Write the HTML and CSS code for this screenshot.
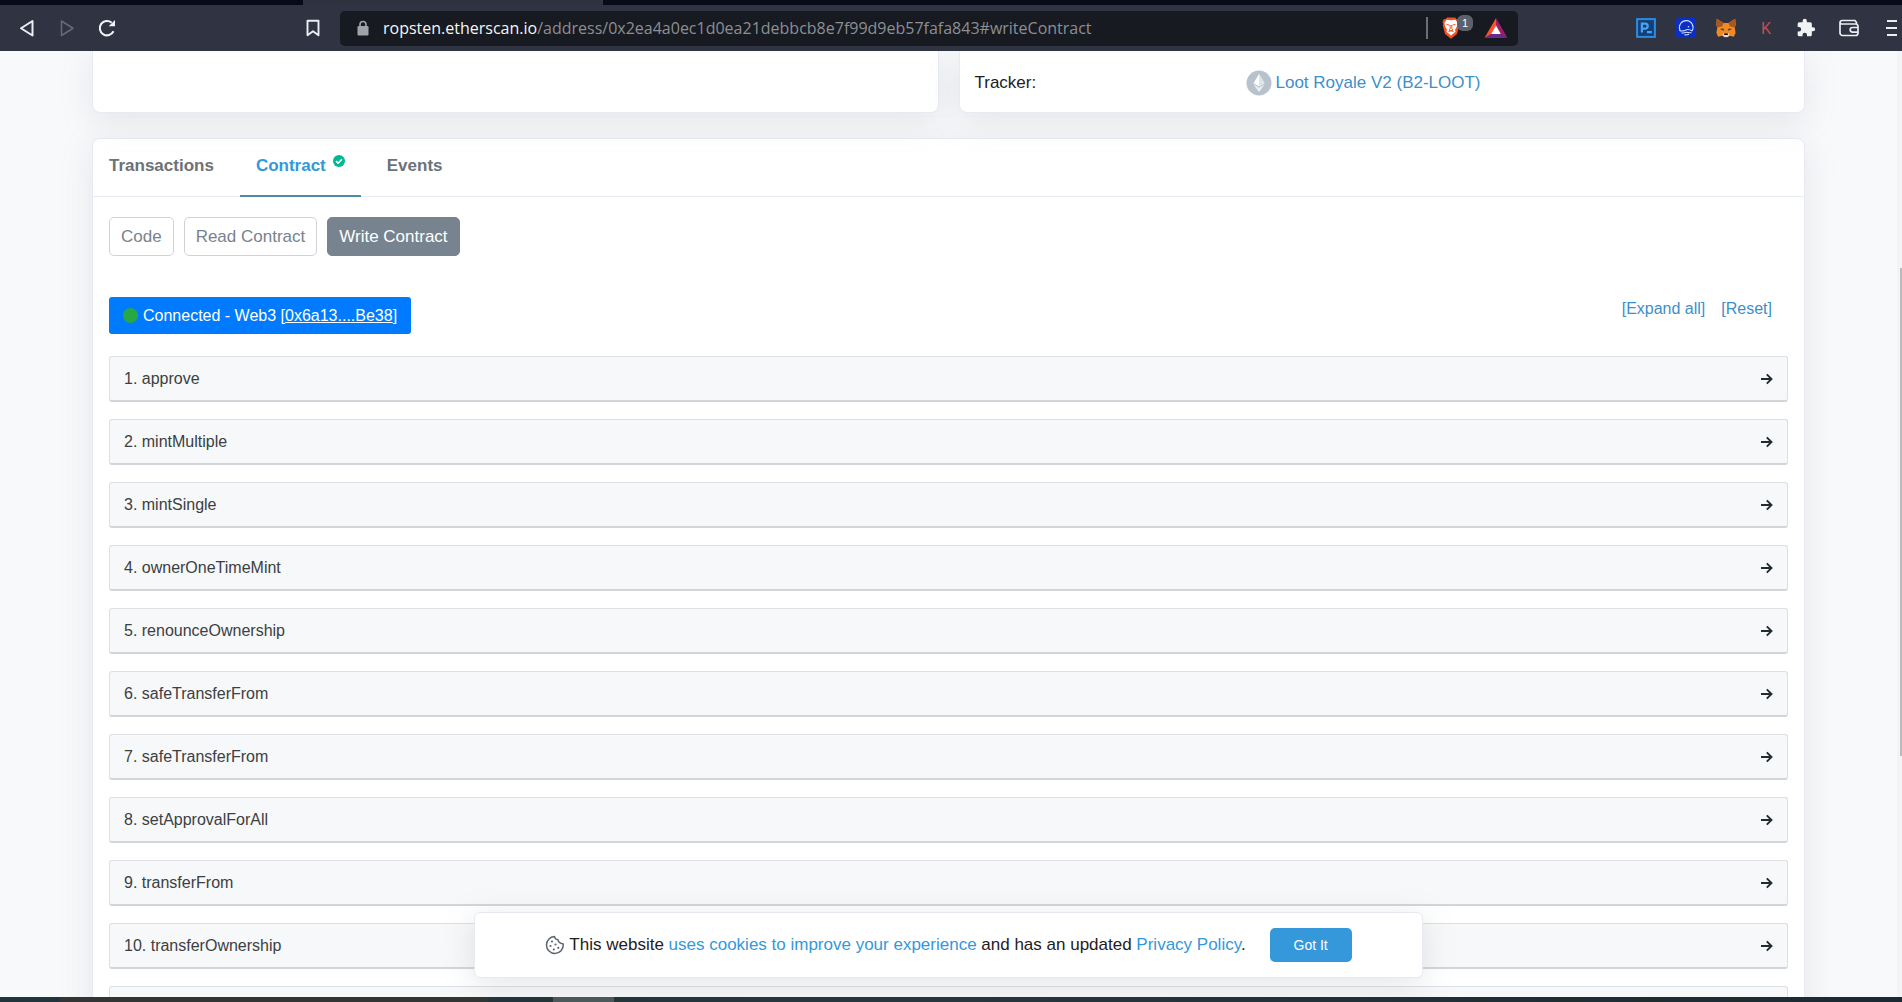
FILE: index.html
```html
<!DOCTYPE html>
<html lang="en">
<head>
<meta charset="utf-8">
<title>Contract | Etherscan</title>
<link rel="stylesheet" href="styles.css">
</head>
<body>
<div class="tabstrip"><div class="tabstrip-active"></div></div>
<header class="toolbar">
  <div class="nav-group">
    <button class="tool" aria-label="Back"><svg width="20" height="20" viewBox="0 0 20 20"><path d="M15.500 3v14.500L4 10.250z" fill="none" stroke="#eceef5" stroke-width="2" stroke-linejoin="round"/></svg></button>
    <button class="tool" aria-label="Forward"><svg width="20" height="20" viewBox="0 0 20 20"><path d="M4.500 3v14.500L16 10.250z" fill="none" stroke="#666a78" stroke-width="1.500" stroke-linejoin="round"/></svg></button>
    <button class="tool" aria-label="Reload"><svg width="20" height="20" viewBox="0 0 20 20"><path d="M16.500 13.300A7.200 7.200 0 1 1 14.700 4.700" fill="none" stroke="#f2f3f8" stroke-width="2.100"/><path d="M18 2v6.300h-6.300z" fill="#f2f3f8"/></svg></button>
  </div>
  <button class="tool bookmark" aria-label="Bookmark"><svg width="20" height="20" viewBox="0 0 20 20"><path d="M4.500 2.800h11v14.400L10 13.200l-5.500 4z" fill="none" stroke="#eceef5" stroke-width="1.900" stroke-linejoin="round"/></svg></button>
  <div class="address">
    <svg width="12" height="16" viewBox="0 0 12 16"><path d="M3 7V4.500a3 3 0 0 1 6 0V7" fill="none" stroke="#a0a3a8" stroke-width="1.600"/><rect x="0.500" y="6" width="11" height="9.500" rx="1.300" fill="#a0a3a8"/></svg>
    <div class="url"><span class="host">ropsten.etherscan.io</span>/address/0x2ea4a0ec1d0ea21debbcb8e7f99d9eb57fafa843#writeContract</div>
    <button class="tool shield" aria-label="Shields">
      <svg width="18" height="22" viewBox="0 0 18 22"><path d="M5 0.500h8l1.500 1.800 1.700-.3 1.300 3-.7 2 .4 1.500-2.200 8.500L9 21.700 3 17 .8 8.500 1.200 7 .5 5l1.300-3 1.700.3z" fill="#f4511e"/><path d="M9 3.300l4.500-.5 2 3-.5 3.500-2 3.500.5 2L9 18.500 4.500 14.800l.5-2L3 9.300 2.500 5.800l2-3z" fill="#fff"/><path d="M4.500 7.300l3 .9M13.500 7.300l-3 .9M8.200 8v3.500L7 13l2 1 2-1-1.200-1.500V8M6.300 14.800L9 13.600l2.700 1.200" fill="none" stroke="#f4511e" stroke-width="1"/></svg>
      <span class="badge">1</span>
    </button>
    <button class="tool" aria-label="Rewards"><svg width="24" height="22" viewBox="0 0 24 22"><path d="M12 1L.5 21 7.500 17 12 8.500z" fill="#ff5026"/><path d="M12 1l11.500 20-7-4L12 8.500z" fill="#9e1f63"/><path d="M.5 21h23l-7-4h-9z" fill="#662d91"/><path d="M12 8.500L16.800 17H7.200z" fill="#fff"/></svg></button>
  </div>
  <div class="extensions">
    <button class="tool" aria-label="P extension"><svg width="20" height="20" viewBox="0 0 22 22"><rect x="1.200" y="1.200" width="19.600" height="19.600" fill="#123f78" stroke="#2f8be0" stroke-width="2.200"/><path d="M6.500 16V6.300h3.600a2.700 2.700 0 0 1 0 5.500H6.500M12 15.500h5.500" fill="none" stroke="#4aa3f2" stroke-width="2.500"/></svg></button>
    <button class="tool" aria-label="Blue extension"><svg width="20" height="20" viewBox="0 0 20 20"><rect width="20" height="20" rx="2" fill="#0b2fc4"/><path d="M4 12.200A6.800 6.800 0 1 1 16 13M3.300 12.200c2 1.400 4.300.8 6 0 2.300-1.200 4.500-.8 6.700.8M5.500 14.800c2 .6 3-.5 5-.5s3 1 5 .3M8.500 16.800c1.500.4 3-.4 4.500-.2" fill="none" stroke="#cfdcff" stroke-width="1.100"/><circle cx="12.500" cy="8.800" r=".8" fill="#cfdcff"/></svg></button>
    <button class="tool" aria-label="Fox wallet"><svg width="20" height="20" viewBox="0 0 20 20"><path d="M.8.8L7.500 5h5L19.200.8l.5 6-1 3 .9 5-1.700 4-4.200-1-2 1.400H8.300l-2-1.400-4.200 1-1.700-4 .9-5-1-3z" fill="#f08a24"/><path d="M.8.8L7.500 5 6 8.500l-4.700 1L.3 6.800zM19.200.8L12.500 5 14 8.500l4.700 1 1-2.700z" fill="#a9571d"/><path d="M3.800 11l3.500-.6.8 2.400zM16.200 11l-3.500-.6-.8 2.400z" fill="#33363d"/><path d="M7 15.500l1.200-.5h3.600l1.200.5.3 2-2 1.500H8.700l-2-1.500z" fill="#e8ddd2"/><path d="M8.300 15.300h3.400l.3 1.700H8z" fill="#17191d"/></svg></button>
    <button class="tool k-ext" aria-label="K extension">K</button>
    <button class="tool" aria-label="Extensions"><svg width="20" height="20" viewBox="0 0 24 24"><path d="M20.500 11H19V7a2 2 0 0 0-2-2h-4V3.500a2.500 2.500 0 0 0-5 0V5H4a2 2 0 0 0-2 2v3.800h1.500a2.700 2.700 0 0 1 0 5.400H2V20a2 2 0 0 0 2 2h3.800v-1.500a2.700 2.700 0 0 1 5.400 0V22H17a2 2 0 0 0 2-2v-4h1.500a2.500 2.500 0 0 0 0-5z" fill="#f1f2f4"/></svg></button>
    <button class="tool" aria-label="Wallet"><svg width="26" height="20" viewBox="-3 0 26 20"><path d="M17.500 6V4.500l-1.500-2H3a2 2 0 0 0-2 2V15a2.500 2.500 0 0 0 2.500 2.500h13A2.500 2.500 0 0 0 19 15V8.500A2.300 2.300 0 0 0 16.700 6H3a2 2 0 0 1-2-1.700M19 9.500h-5.500a2.300 2.300 0 0 0 0 4.600H19" fill="none" stroke="#eceef2" stroke-width="1.700"/></svg></button>
    <button class="tool" aria-label="Menu"><svg width="20" height="20" viewBox="0 0 20 20"><path d="M5 3h10M4 10h11M5 17h10" stroke="#eceef2" stroke-width="1.900"/></svg></button>
  </div>
</header>

<div class="viewport">
  <main class="page">
    <section class="overview">
      <div class="card"></div>
      <div class="card tracker">
        <span>Tracker:</span>
        <a href="#token"><svg width="26" height="26" viewBox="0 0 26 26"><circle cx="13" cy="13" r="12.500" fill="#b8c2cc"/><path d="M13 4l5.500 9.200L13 16.500l-5.500-3.300z" fill="#fff"/><path d="M7.500 14.500L13 17.800l5.500-3.300L13 22z" fill="#eef1f4"/><path d="M13 4v12.500l5.500-3.300z" fill="#dfe4e9"/></svg>Loot Royale V2 (B2-LOOT)</a>
      </div>
    </section>

    <section class="card contract">
      <nav class="tabs">
        <a href="#transactions">Transactions</a>
        <a href="#code" class="active">Contract<svg width="12" height="12" viewBox="0 0 12 12"><circle cx="6" cy="6" r="6" fill="#00b894"/><path d="M3 6.200l2.100 2L9 4.200" fill="none" stroke="#fff" stroke-width="1.600"/></svg></a>
        <a href="#events">Events</a>
      </nav>
      <div class="body">
        <div class="pills">
          <button>Code</button>
          <button>Read Contract</button>
          <button class="current">Write Contract</button>
        </div>
        <div class="status">
          <button class="connect"><i></i><span>Connected - Web3 [<u>0x6a13....Be38</u>]</span></button>
          <div class="actions"><a href="#expand">[Expand all]</a><a href="#reset">[Reset]</a></div>
        </div>
        <div class="methods">
          <button>1. approve<svg><use href="#arrow"/></svg></button>
          <button>2. mintMultiple<svg><use href="#arrow"/></svg></button>
          <button>3. mintSingle<svg><use href="#arrow"/></svg></button>
          <button>4. ownerOneTimeMint<svg><use href="#arrow"/></svg></button>
          <button>5. renounceOwnership<svg><use href="#arrow"/></svg></button>
          <button>6. safeTransferFrom<svg><use href="#arrow"/></svg></button>
          <button>7. safeTransferFrom<svg><use href="#arrow"/></svg></button>
          <button>8. setApprovalForAll<svg><use href="#arrow"/></svg></button>
          <button>9. transferFrom<svg><use href="#arrow"/></svg></button>
          <button>10. transferOwnership<svg><use href="#arrow"/></svg></button>
          <button aria-label="Next method"></button>
        </div>
      </div>
    </section>

    <aside class="cookies">
      <svg width="20" height="20" viewBox="0 0 20 20"><path d="M9.500 1.500c.3 2 1.500 3.200 3.500 3.300.2 2 1.500 3.500 5.300 4.200.3 5.500-3.500 9.500-8.300 9.500a8.500 8.500 0 0 1-8.500-8.500c0-4.500 3.300-8.300 8-8.500z" fill="none" stroke="#5f666c" stroke-width="1.500" stroke-linejoin="round"/><g fill="#5f666c"><circle cx="7" cy="6.500" r="1.100"/><circle cx="5.500" cy="11" r="1.100"/><circle cx="10.500" cy="9.500" r="1.100"/><circle cx="8.800" cy="14.500" r="1.100"/><circle cx="13.300" cy="12.800" r="1.100"/></g></svg>
      <p>This website <a href="#cookies">uses cookies to improve your experience</a> and has an updated <a href="#privacy">Privacy Policy</a>.</p>
      <button>Got It</button>
    </aside>
  </main>
  <div class="scrollbar"><div class="thumb"></div></div>
</div>
<footer class="taskbar"><i class="search"></i><i class="gap"></i><i class="app"></i></footer>

<svg class="defs"><symbol id="arrow" viewBox="0 0 12 12"><path d="M0 6h10.500M5.800 1.300L10.500 6l-4.700 4.700" fill="none" stroke="#212b30" stroke-width="1.900"/></symbol></svg>
</body>
</html>
```
FILE: styles.css
```css
* { box-sizing: border-box; }
body {
  margin: 0;
  height: 100vh;
  display: flex;
  flex-direction: column;
  overflow: hidden;
  background: #f8f9fb;
  color: #1e2022;
  font-family: "Liberation Sans", Arial, sans-serif;
  font-size: 17px;
}
button { font: inherit; cursor: pointer; }
a { color: #3c8fc9; text-decoration: none; }
svg { display: block; flex: none; }
.defs { display: none; }

/* Browser chrome */
.tabstrip { height: 5px; flex: none; background: #090a18; padding-left: 303px; }
.tabstrip-active { width: 300px; height: 5px; background: #30333f; }
.toolbar {
  height: 46px;
  flex: none;
  display: flex;
  align-items: center;
  padding-left: 17px;
  background: #303341;
}
.tool { display: flex; padding: 0; border: 0; background: none; }
.nav-group { display: flex; gap: 20px; }
.bookmark { margin: 0 17px 0 auto; }
.address {
  flex: 0 1 1178px;
  min-width: 0;
  height: 35px;
  display: flex;
  align-items: center;
  padding: 0 10px 0 17px;
  border-radius: 5px;
  background: #171a21;
}
.url {
  flex: 1;
  min-width: 0;
  overflow: hidden;
  margin-left: 14px;
  font-family: "Open Sans", "Noto Sans", sans-serif;
  font-size: 16px;
  line-height: 24px;
  color: #8c8f93;
  white-space: nowrap;
}
.host { color: #f5f6f7; }
.shield {
  position: relative;
  padding: 0 24px 0 14px;
  border-left: 2px solid #6b6e74;
}
.badge {
  position: absolute;
  left: 29px;
  top: -2px;
  width: 16px;
  height: 16px;
  border-radius: 6px;
  background: #5c626b;
  color: #fff;
  font-size: 11px;
  line-height: 16px;
  text-align: center;
}
.extensions { display: flex; align-items: center; gap: 20px; margin-left: 118px; }
.k-ext { width: 20px; justify-content: center; color: #bf4f51; font-family: Roboto, sans-serif; font-size: 16px; }

/* Page */
.viewport { flex: 1; min-height: 0; display: flex; overflow: hidden; }
.page { position: relative; flex: 1; min-width: 0; padding: 0 92px; overflow: hidden; }
.scrollbar { width: 5px; padding-top: 217px; background: #f3f4f5; }
.thumb { width: 2px; height: 67%; margin-left: auto; background: #b9bbbd; }
.card {
  border: 1px solid #e7eaf3;
  border-radius: 8px;
  background: #fff;
  box-shadow: 0 8px 32px rgba(140, 146, 150, .18);
}
.overview { display: grid; grid-template-columns: 1fr 1fr; gap: 20px; margin-bottom: 25px; }
.overview .card { height: 62px; border-top: 0; border-radius: 0 0 8px 8px; }
.tracker { display: grid; grid-template-columns: 271px 1fr; align-items: center; padding: 3px 15px 0; }
.tracker a { display: flex; align-items: center; gap: 4px; }

.tabs { display: flex; gap: 10px; border-bottom: 1px solid #e7eaf3; }
.tabs a {
  display: flex;
  gap: 7px;
  padding: 16px 16px 18px;
  border-bottom: 2px solid transparent;
  margin-bottom: -1px;
  color: #6c7277;
  font-weight: bold;
  line-height: 22px;
}
.tabs .active { color: #3498db; border-color: #4b8ea6; }
.body { padding: 20px 16px; }
.pills { display: flex; gap: 10px; }
.pills button {
  height: 39px;
  padding: 0 11px;
  border: 1px solid #cfd3d7;
  border-radius: 5px;
  background: #fff;
  color: #77838f;
}
.pills .current { border-color: #77838f; background: #77838f; color: #fff; }
.status { display: flex; justify-content: space-between; align-items: flex-start; margin: 41px 0 22px; font-size: 16px; }
.connect {
  display: flex;
  align-items: center;
  gap: 5px;
  height: 37px;
  padding: 0 14px;
  border: 0;
  border-radius: 3px;
  background: #007bff;
  color: #fff;
}
.connect i { width: 15px; height: 15px; border-radius: 50%; background: #28a745; }
.actions { display: flex; gap: 16px; padding-right: 16px; line-height: 24px; }
.methods { display: flex; flex-direction: column; gap: 17px; }
.methods button {
  display: flex;
  justify-content: space-between;
  align-items: center;
  height: 46px;
  padding: 0 14px;
  border: 1px solid #dcdfe3;
  border-bottom: 2px solid #d2d5d9;
  border-radius: 3px;
  background: #f7f8f9;
  color: #3b4043;
  font-size: 16px;
}
.methods svg { width: 12px; height: 12px; }

.cookies {
  position: absolute;
  left: 25%;
  right: 25%;
  bottom: 19px;
  height: 66px;
  display: flex;
  align-items: center;
  justify-content: center;
  border: 1px solid #e7eaf0;
  border-radius: 6px;
  background: #fff;
  box-shadow: 0 6px 30px rgba(140, 152, 164, .25);
}
.cookies p { margin: 0 24px 0 4px; white-space: nowrap; }
.cookies a { color: #3498db; }
.cookies button {
  width: 82px;
  height: 34px;
  border: 0;
  border-radius: 5px;
  background: #3498db;
  color: #fff;
  font-size: 14px;
}

.taskbar { flex: none; height: 5px; display: flex; padding-left: 59px; background: linear-gradient(90deg, #20353b, #27363a 50%, #1b2a30); }
.search { width: 429px; background: #333535; }
.gap { width: 65px; }
.app { width: 61px; background: #4c595c; }
```
